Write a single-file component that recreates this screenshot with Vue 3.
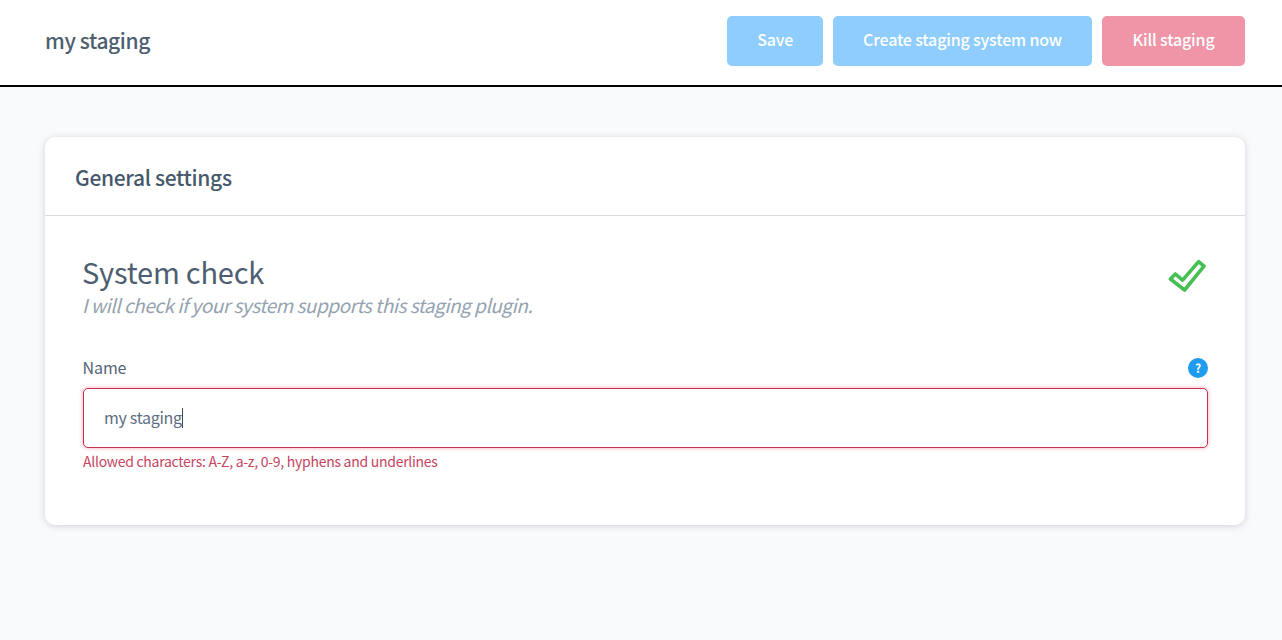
<script setup>
const buttons = [
  { label: 'Save', kind: 'blue' },
  { label: 'Create staging system now', kind: 'blue' },
  { label: 'Kill staging', kind: 'red' }
]
</script>

<template>
  <div class="page">
    <header class="bar">
      <h1 class="title">my staging</h1>
      <div class="actions">
        <button v-for="b in buttons" :key="b.label" class="btn" :class="b.kind">{{ b.label }}</button>
      </div>
    </header>
    <main class="content">
      <section class="card">
        <h2 class="card-title">General settings</h2>
        <div class="card-body">
          <div class="check">
            <div class="check-text">
              <h3 class="check-title">System check</h3>
              <p class="check-sub">I will check if your system supports this staging plugin.</p>
            </div>
            <svg class="tick" width="38" height="34" viewBox="0 0 38 34" fill="none">
              <path d="M2.4 20 L7.4 15 L14.6 21.2 L30.6 2.6 L36 7.2 L16.6 31 Z" stroke="#46bf55" stroke-width="3.6" stroke-linejoin="round" />
            </svg>
          </div>
          <div class="label-row">
            <span class="label">Name</span>
            <span class="help">?</span>
          </div>
          <div class="field"><span class="value">my staging</span><span class="caret"></span></div>
          <p class="error">Allowed characters: A-Z, a-z, 0-9, hyphens and underlines</p>
        </div>
      </section>
    </main>
  </div>
</template>

<style>
html, body { margin: 0; background: #f9fafc; }
</style>

<style scoped>
.page {
  min-height: 640px;
  background: #f9fafc;
  font-family: "Noto Sans CJK SC", "Noto Sans", sans-serif;
  color: #46586c;
}
.bar {
  height: 85px;
  background: #fff;
  border-bottom: 2px solid #000;
  display: flex;
  align-items: center;
  justify-content: space-between;
  padding: 0 37px 0 45px;
}
.title { margin: 0 0 5px; font-size: 21px; line-height: 30px; letter-spacing: -0.4px; font-weight: 500; color: #4d5e70; }
.actions { display: flex; gap: 10px; margin-top: -4px; }
.btn {
  height: 50px;
  border: 0;
  border-radius: 5px;
  padding: 0 30px 4px;
  color: #fff;
  font: 500 16px/46px "Noto Sans CJK SC", "Noto Sans", sans-serif;
  letter-spacing: -0.16px;
}
.red { padding: 0 30.5px 4px; }
.blue { background: #8ecdfd; }
.red { background: #ef95a7; }
.content { padding: 50px 37px 0 45px; }
.card {
  background: #fff;
  border-radius: 10px;
  box-shadow: 0 1px 7px rgba(40, 50, 70, 0.2);
  height: 388px;
}
.card-title {
  margin: 0;
  height: 79px;
  box-sizing: border-box;
  border-bottom: 1px solid #d9dce0;
  padding: 25px 30px 0;
  font-size: 21px;
  line-height: 30px;
  letter-spacing: -0.33px;
  font-weight: 500;
  color: #46586c;
}
.card-body { padding: 35px 37px 0 38px; }
.check { display: flex; justify-content: space-between; align-items: flex-start; }
.check-text { margin-left: -1px; }
.check-title { margin: 0; font-size: 29px; line-height: 40px; letter-spacing: -0.2px; font-weight: 400; color: #4d5e70; }
.check-sub { margin: -1px 0 0; font-size: 19px; line-height: 30px; letter-spacing: -0.49px; font-style: italic; color: #94a2b0; }
.tick { margin: 8px 2px 0 0; }
.label-row { display: flex; justify-content: space-between; align-items: center; margin-top: 36px; height: 24px; }
.label { font-size: 16px; line-height: 22px; letter-spacing: -0.1px; color: #53657a; margin: 0 0 2px -0.5px; }
.help {
  width: 20px; height: 20px; border-radius: 50%;
  background: #1f9bf0; color: #fff;
  font-size: 12px; line-height: 20px; font-weight: 700; text-align: center;
}
.field {
  margin-top: 8px;
  height: 60px;
  box-sizing: border-box;
  border: 1px solid #c9304f;
  border-radius: 5px;
  box-shadow: 0 0 4px rgba(222, 41, 76, 0.4);
  padding: 0 20px;
  display: flex;
  align-items: center;
  background: #fff;
}
.value { font-size: 16px; line-height: 22px; letter-spacing: -0.3px; color: #5d6d7f; margin-bottom: 2px; }
.caret { width: 1px; height: 20px; background: #3d4c5c; }
.error { margin: 2px 0 0; font-size: 14px; line-height: 22px; letter-spacing: -0.27px; color: #c4455f; }
</style>
